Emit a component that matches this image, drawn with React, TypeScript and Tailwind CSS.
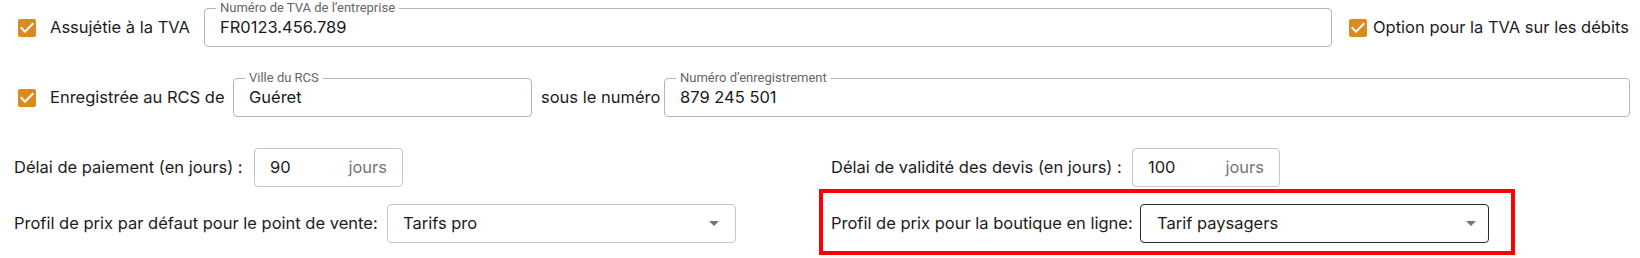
import React from 'react';

const font = "font-['Inter','Liberation_Sans',sans-serif]";

function Check() {
  return (
    <svg viewBox="0 0 24 24" className="w-[24px] h-[24px] shrink-0">
      <path
        fill="#DA8A1F"
        d="M19 3H5c-1.11 0-2 .9-2 2v14c0 1.1.89 2 2 2h14c1.11 0 2-.9 2-2V5c0-1.1-.89-2-2-2zm-9 14l-5-5 1.41-1.41L10 14.17l7.59-7.59L19 8l-9 9z"
      />
    </svg>
  );
}

function Outlined({ label, value, className }: { label: string; value: string; className?: string }) {
  return (
    <fieldset className={`-mt-[6px] h-[45px] border border-[#b5b5b5] rounded-[4px] pl-[11px] pr-[11px] min-w-0 ${className ?? ''}`}>
      <legend className="px-[4px] text-[13px] leading-[12px] text-[#666] font-['Roboto',sans-serif]">{label}</legend>
      <div className="pl-[4px] pt-[1px] text-[16.5px] leading-[24px] text-[#1a1a1a]">{value}</div>
    </fieldset>
  );
}

function Arrow() {
  return (
    <svg viewBox="7 10 10 5" className="w-[10px] h-[5px]">
      <path d="M7 10l5 5 5-5z" fill="#757575" />
    </svg>
  );
}

export default function App() {
  return (
    <div className={`w-[1640px] h-[258px] bg-white pt-[8px] text-[16.5px] text-[#1c1c1c] ${font}`}>
      {/* TVA */}
      <div className="flex items-center h-[39px] pl-[15px] pr-[10px]">
        <Check />
        <span className="ml-[11px] w-[154px] whitespace-nowrap">Assujétie à la TVA</span>
        <Outlined label="Numéro de TVA de l’entreprise" value="FR0123.456.789" className="flex-1" />
        <div className="ml-[14px] flex items-center">
          <Check />
          <span className="ml-[3px] w-[257px] whitespace-nowrap">Option pour la TVA sur les débits</span>
        </div>
      </div>

      {/* RCS */}
      <div className="flex items-center h-[39px] mt-[31px] pl-[15px] pr-[10px]">
        <Check />
        <span className="ml-[11px] w-[183px] whitespace-nowrap">Enregistrée au RCS de</span>
        <Outlined label="Ville du RCS" value="Guéret" className="w-[299px]" />
        <span className="ml-[9px] w-[123px] whitespace-nowrap">sous le numéro</span>
        <Outlined label="Numéro d’enregistrement" value="879 245 501" className="flex-1" />
      </div>

      {/* Délais */}
      <div className="grid grid-cols-[819px_1fr] mt-[31px]">
        <div className="flex items-center h-[39px] pl-[14px]">
          <span className="w-[240px] whitespace-nowrap">Délai de paiement (en jours) :</span>
          <div className="w-[149px] h-[39px] border border-[#c4c4c4] rounded-[4px] flex items-center justify-between px-[15px]">
            <span>90</span>
            <span className="text-[#767676]">jours</span>
          </div>
        </div>
        <div className="flex items-center h-[39px] pl-[12px]">
          <span className="w-[301px] whitespace-nowrap">Délai de validité des devis (en jours) :</span>
          <div className="w-[148px] h-[39px] border border-[#c4c4c4] rounded-[4px] flex items-center justify-between px-[15px]">
            <span>100</span>
            <span className="text-[#767676]">jours</span>
          </div>
        </div>
      </div>

      {/* Profils de prix */}
      <div className="grid grid-cols-[819px_1fr] mt-[2px]">
        <div className="flex items-start pt-[15px] pl-[14px]">
          <span className="w-[373px] h-[39px] flex items-center whitespace-nowrap">Profil de prix par défaut pour le point de vente:</span>
          <div className="w-[349px] h-[39px] border border-[#c4c4c4] rounded-[4px] flex items-center justify-between pl-[15px] pr-[16px]">
            <span>Tarifs pro</span>
            <Arrow />
          </div>
        </div>
        <div>
          <div className="w-[696px] h-[66px] border-[4px] border-[#ff0000] flex items-start pl-[8px] pt-[11px]">
            <span className="w-[309px] h-[39px] flex items-center whitespace-nowrap">Profil de prix pour la boutique en ligne:</span>
            <div className="w-[349px] h-[39px] border border-[#2a2a2a] rounded-[4px] flex items-center justify-between pl-[16px] pr-[12px]">
              <span>Tarif paysagers</span>
              <Arrow />
            </div>
          </div>
        </div>
      </div>
    </div>
  );
}
